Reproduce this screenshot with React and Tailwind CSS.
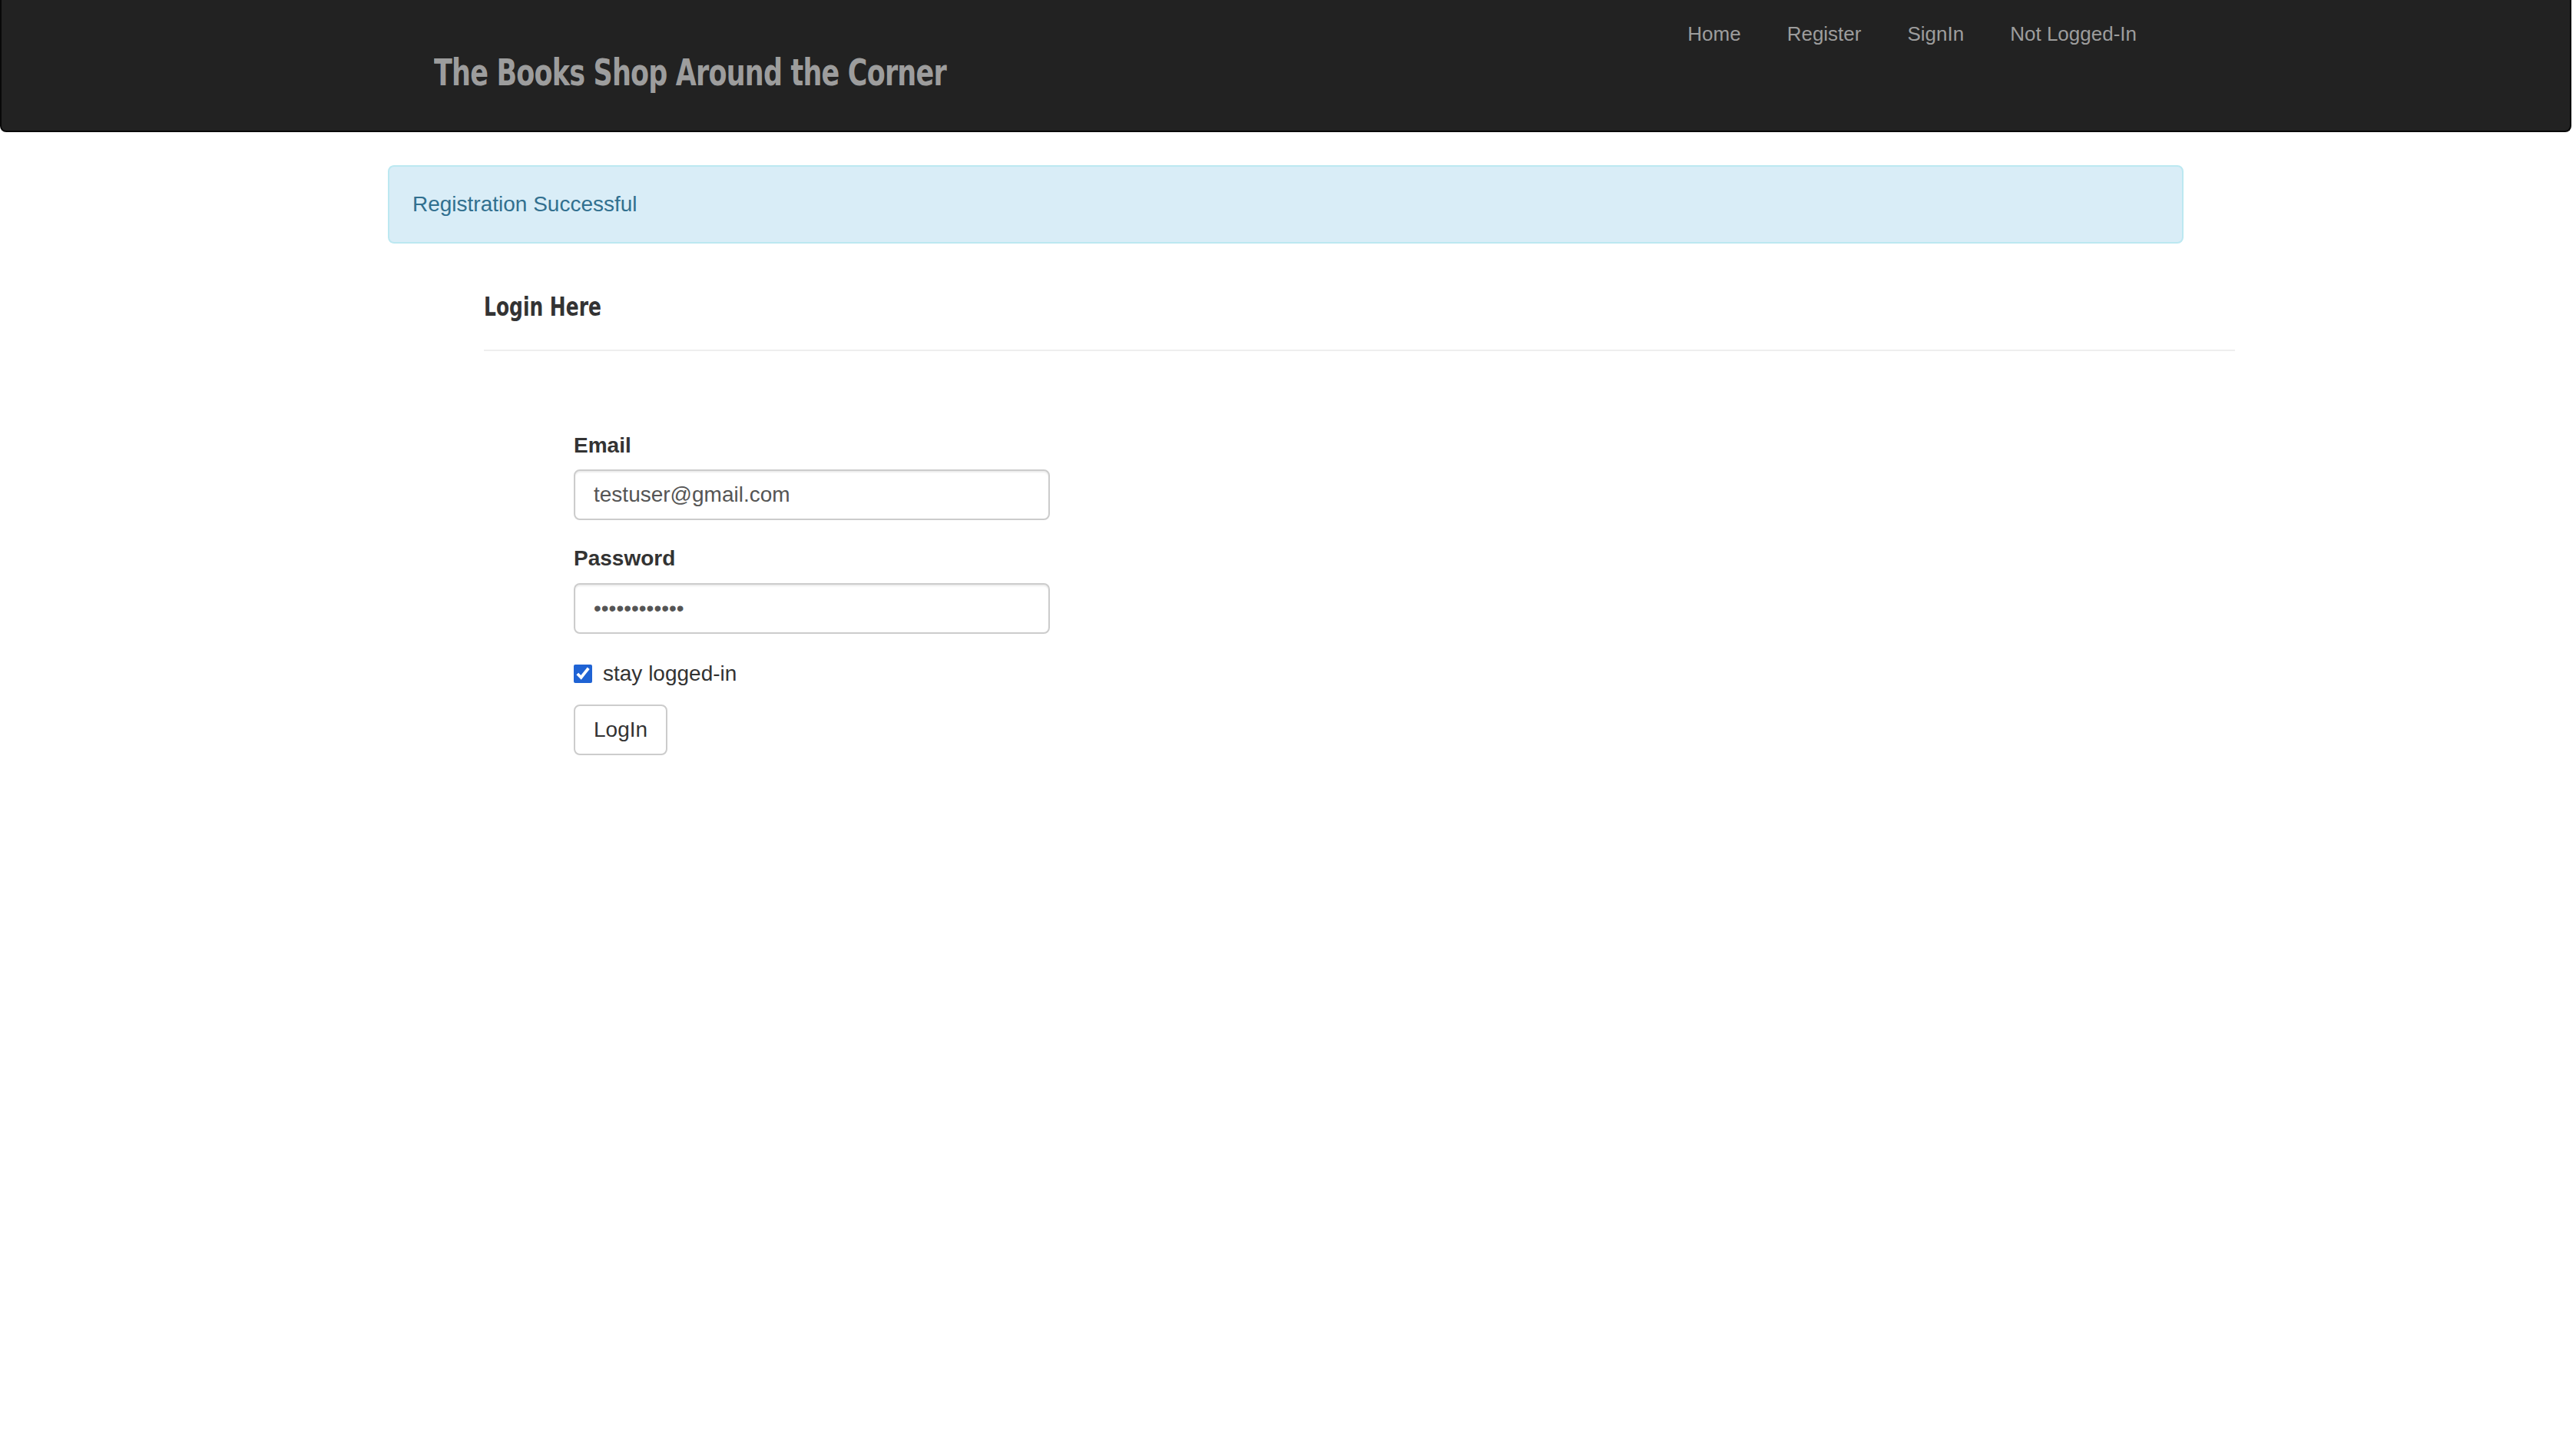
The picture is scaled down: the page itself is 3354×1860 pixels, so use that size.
import { useState } from "react";

const navLinks = ["Home", "Register", "SignIn", "Not Logged-In"];

export default function App() {
  const [email, setEmail] = useState("testuser@gmail.com");
  const [password, setPassword] = useState("testuser1234");
  const [stay, setStay] = useState(true);

  return (
    <div className="min-h-screen bg-white font-['Liberation_Sans',Arial,sans-serif] text-[28px] text-[#333]">
      {/* NAVBAR */}
      <nav className="w-[3348px] h-[172px] bg-[#222] border-2 border-t-0 border-[#080808] rounded-b-[8px]">
        <div className="w-[2336px] mx-auto flex justify-between items-start">
          <div className="pl-[59px] pt-[69px]">
            <a className="block text-[#9d9d9d] font-['DejaVu_Sans_Condensed','DejaVu_Sans',sans-serif] font-bold text-[48px] leading-[50px] tracking-[-1px] origin-left scale-x-[0.81] whitespace-nowrap">
              The Books Shop Around the Corner
            </a>
          </div>
          <ul className="flex pt-[24px] pr-[30px]">
            {navLinks.map((l) => (
              <li key={l}>
                <a className="block px-[30px] leading-[40px] text-[26px] text-[#9d9d9d]">{l}</a>
              </li>
            ))}
          </ul>
        </div>
      </nav>

      <div className="w-[3348px]">
        {/* ALERT */}
        <div className="w-[2338px] mx-auto mt-[43px] h-[102px] flex items-center px-[30px] bg-[#d9edf7] border-2 border-[#bce8f1] rounded-[8px] text-[#31708f]">
          Registration Successful
        </div>

        {/* LOGIN */}
        <div className="ml-[630px] w-[2280px]">
          <h3 className="mt-[63px] font-['DejaVu_Sans_Condensed','DejaVu_Sans',sans-serif] font-bold text-[33px] leading-[40px] text-[#333] origin-left scale-x-[0.84] whitespace-nowrap">
            Login Here
          </h3>
          <div className="mt-[35px] h-[2px] bg-[#eee]" />

          <form className="ml-[117px] w-[620px] pt-[103px]" onSubmit={(e) => e.preventDefault()}>
            <div className="mb-[30px]">
              <label className="block font-bold leading-[40px] mb-[11px]">Email</label>
              <input
                type="email"
                value={email}
                onChange={(e) => setEmail(e.target.value)}
                className="block w-full h-[66px] px-[24px] border-2 border-[#ccc] rounded-[8px] text-[#555] shadow-[inset_0_2px_2px_rgba(0,0,0,0.075)] outline-none"
              />
            </div>
            <div>
              <label className="block font-bold leading-[40px] mb-[12px]">Password</label>
              <input
                type="password"
                value={password}
                onChange={(e) => setPassword(e.target.value)}
                className="block w-full h-[66px] px-[24px] border-2 border-[#ccc] rounded-[8px] text-[#555] shadow-[inset_0_2px_2px_rgba(0,0,0,0.075)] outline-none"
              />
            </div>
            <label className="mt-[32px] flex items-center h-[40px] gap-[14px]">
              <input
                type="checkbox"
                checked={stay}
                onChange={(e) => setStay(e.target.checked)}
                className="w-[24px] h-[24px] m-0 accent-[#1f63d4]"
              />
              <span>stay logged-in</span>
            </label>
            <button
              type="submit"
              className="mt-[20px] block h-[66px] px-[24px] bg-white border-2 border-[#ccc] rounded-[8px] text-[#333]"
            >
              LogIn
            </button>
          </form>
        </div>
      </div>
    </div>
  );
}
